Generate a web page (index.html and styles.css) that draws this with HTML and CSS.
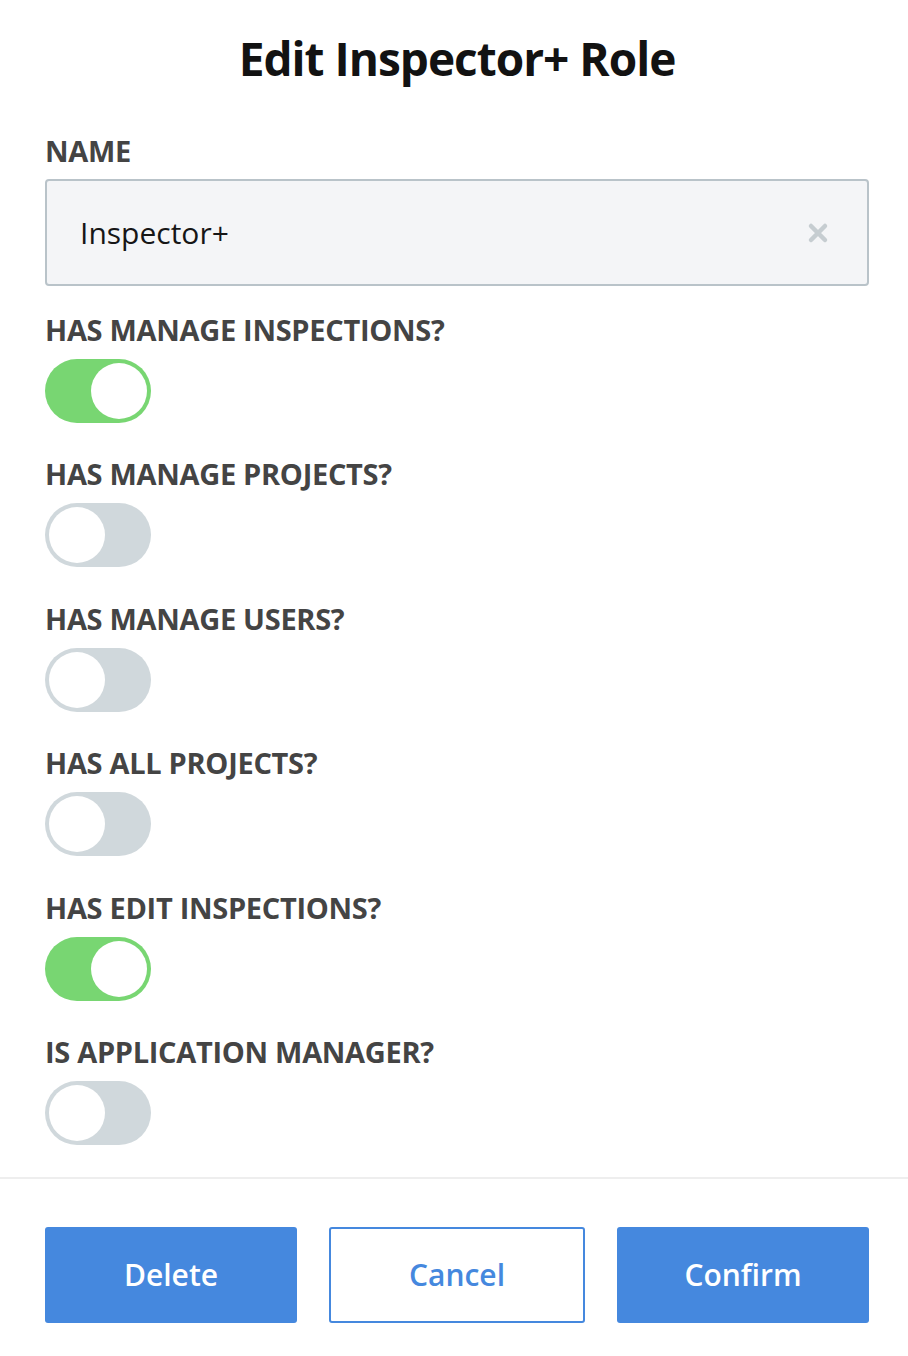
FILE: index.html
```html
<!DOCTYPE html>
<html lang="en">
<head>
<meta charset="utf-8">
<title>Edit Inspector+ Role</title>
<link rel="stylesheet" href="styles.css">
</head>
<body>
<div class="modal">
  <div class="content">
    <h1 class="title">Edit Inspector+ Role</h1>
    <div class="name-field">
      <label class="label">NAME</label>
      <div class="input">
        <span class="input-text">Inspector+</span>
        <svg class="clear" width="22" height="22" viewBox="0 0 22 22"><path d="M4 4 L18 18 M18 4 L4 18" stroke="#c6cdd1" stroke-width="4.5" stroke-linecap="round"/></svg>
      </div>
    </div>
    <div class="fields">
      <div class="field"><div class="label">HAS MANAGE INSPECTIONS?</div><div class="toggle on"><span class="knob"></span></div></div>
      <div class="field"><div class="label">HAS MANAGE PROJECTS?</div><div class="toggle"><span class="knob"></span></div></div>
      <div class="field"><div class="label">HAS MANAGE USERS?</div><div class="toggle"><span class="knob"></span></div></div>
      <div class="field"><div class="label">HAS ALL PROJECTS?</div><div class="toggle"><span class="knob"></span></div></div>
      <div class="field"><div class="label">HAS EDIT INSPECTIONS?</div><div class="toggle on"><span class="knob"></span></div></div>
      <div class="field"><div class="label">IS APPLICATION MANAGER?</div><div class="toggle"><span class="knob"></span></div></div>
    </div>
  </div>
  <div class="footer">
    <button class="btn primary">Delete</button>
    <button class="btn outline">Cancel</button>
    <button class="btn primary">Confirm</button>
  </div>
</div>
</body>
</html>
```
FILE: styles.css
```css
* { box-sizing: border-box; }
html, body { margin: 0; padding: 0; background: #ffffff; }
body { font-family: "Open Sans", "Noto Sans", sans-serif; color: #111; }

.modal { width: 908px; }
.content { padding: 27px 39px 0 45px; }

.title {
  margin: 0;
  height: 64px;
  line-height: 62px;
  font-size: 46px;
  font-weight: 700;
  text-align: center;
  color: #121212;
  letter-spacing: -1px;
}

.name-field { margin-top: 40px; }

.label {
  display: block;
  height: 40px;
  line-height: 39px;
  font-size: 29px;
  font-weight: 700;
  color: #444444;
  letter-spacing: -0.3px;
  white-space: nowrap;
}

.input {
  margin-top: 8px;
  height: 107px;
  border: 2px solid #b9c3c9;
  border-radius: 4px;
  background: #f4f5f7;
  display: flex;
  align-items: center;
  justify-content: space-between;
  padding: 0 38px 0 33px;
}
.input-text { font-size: 30px; color: #161616; }
.clear { display: block; }

.fields {
  margin-top: 24px;
  display: flex;
  flex-direction: column;
  gap: 31.4px;
}

.field { display: flex; flex-direction: column; gap: 9px; }

.toggle {
  width: 106px;
  height: 64px;
  border-radius: 32px;
  background: #d0d8dc;
  padding: 4px;
  display: flex;
}
.toggle .knob {
  width: 56px;
  height: 56px;
  border-radius: 50%;
  background: #ffffff;
}
.toggle.on { background: #78d672; justify-content: flex-end; }

.footer {
  margin-top: 32px;
  border-top: 2px solid #eeeeee;
  padding: 48px 39px 0 45px;
  display: flex;
  gap: 32px;
}

.btn {
  flex: 1;
  height: 96px;
  border-radius: 3px;
  font-family: inherit;
  font-size: 30px;
  font-weight: 600;
  line-height: 1;
  cursor: pointer;
}
.btn.primary { background: #4588de; color: #ffffff; border: none; }
.btn.outline { background: #ffffff; color: #4588de; border: 2px solid #4588de; }
```
